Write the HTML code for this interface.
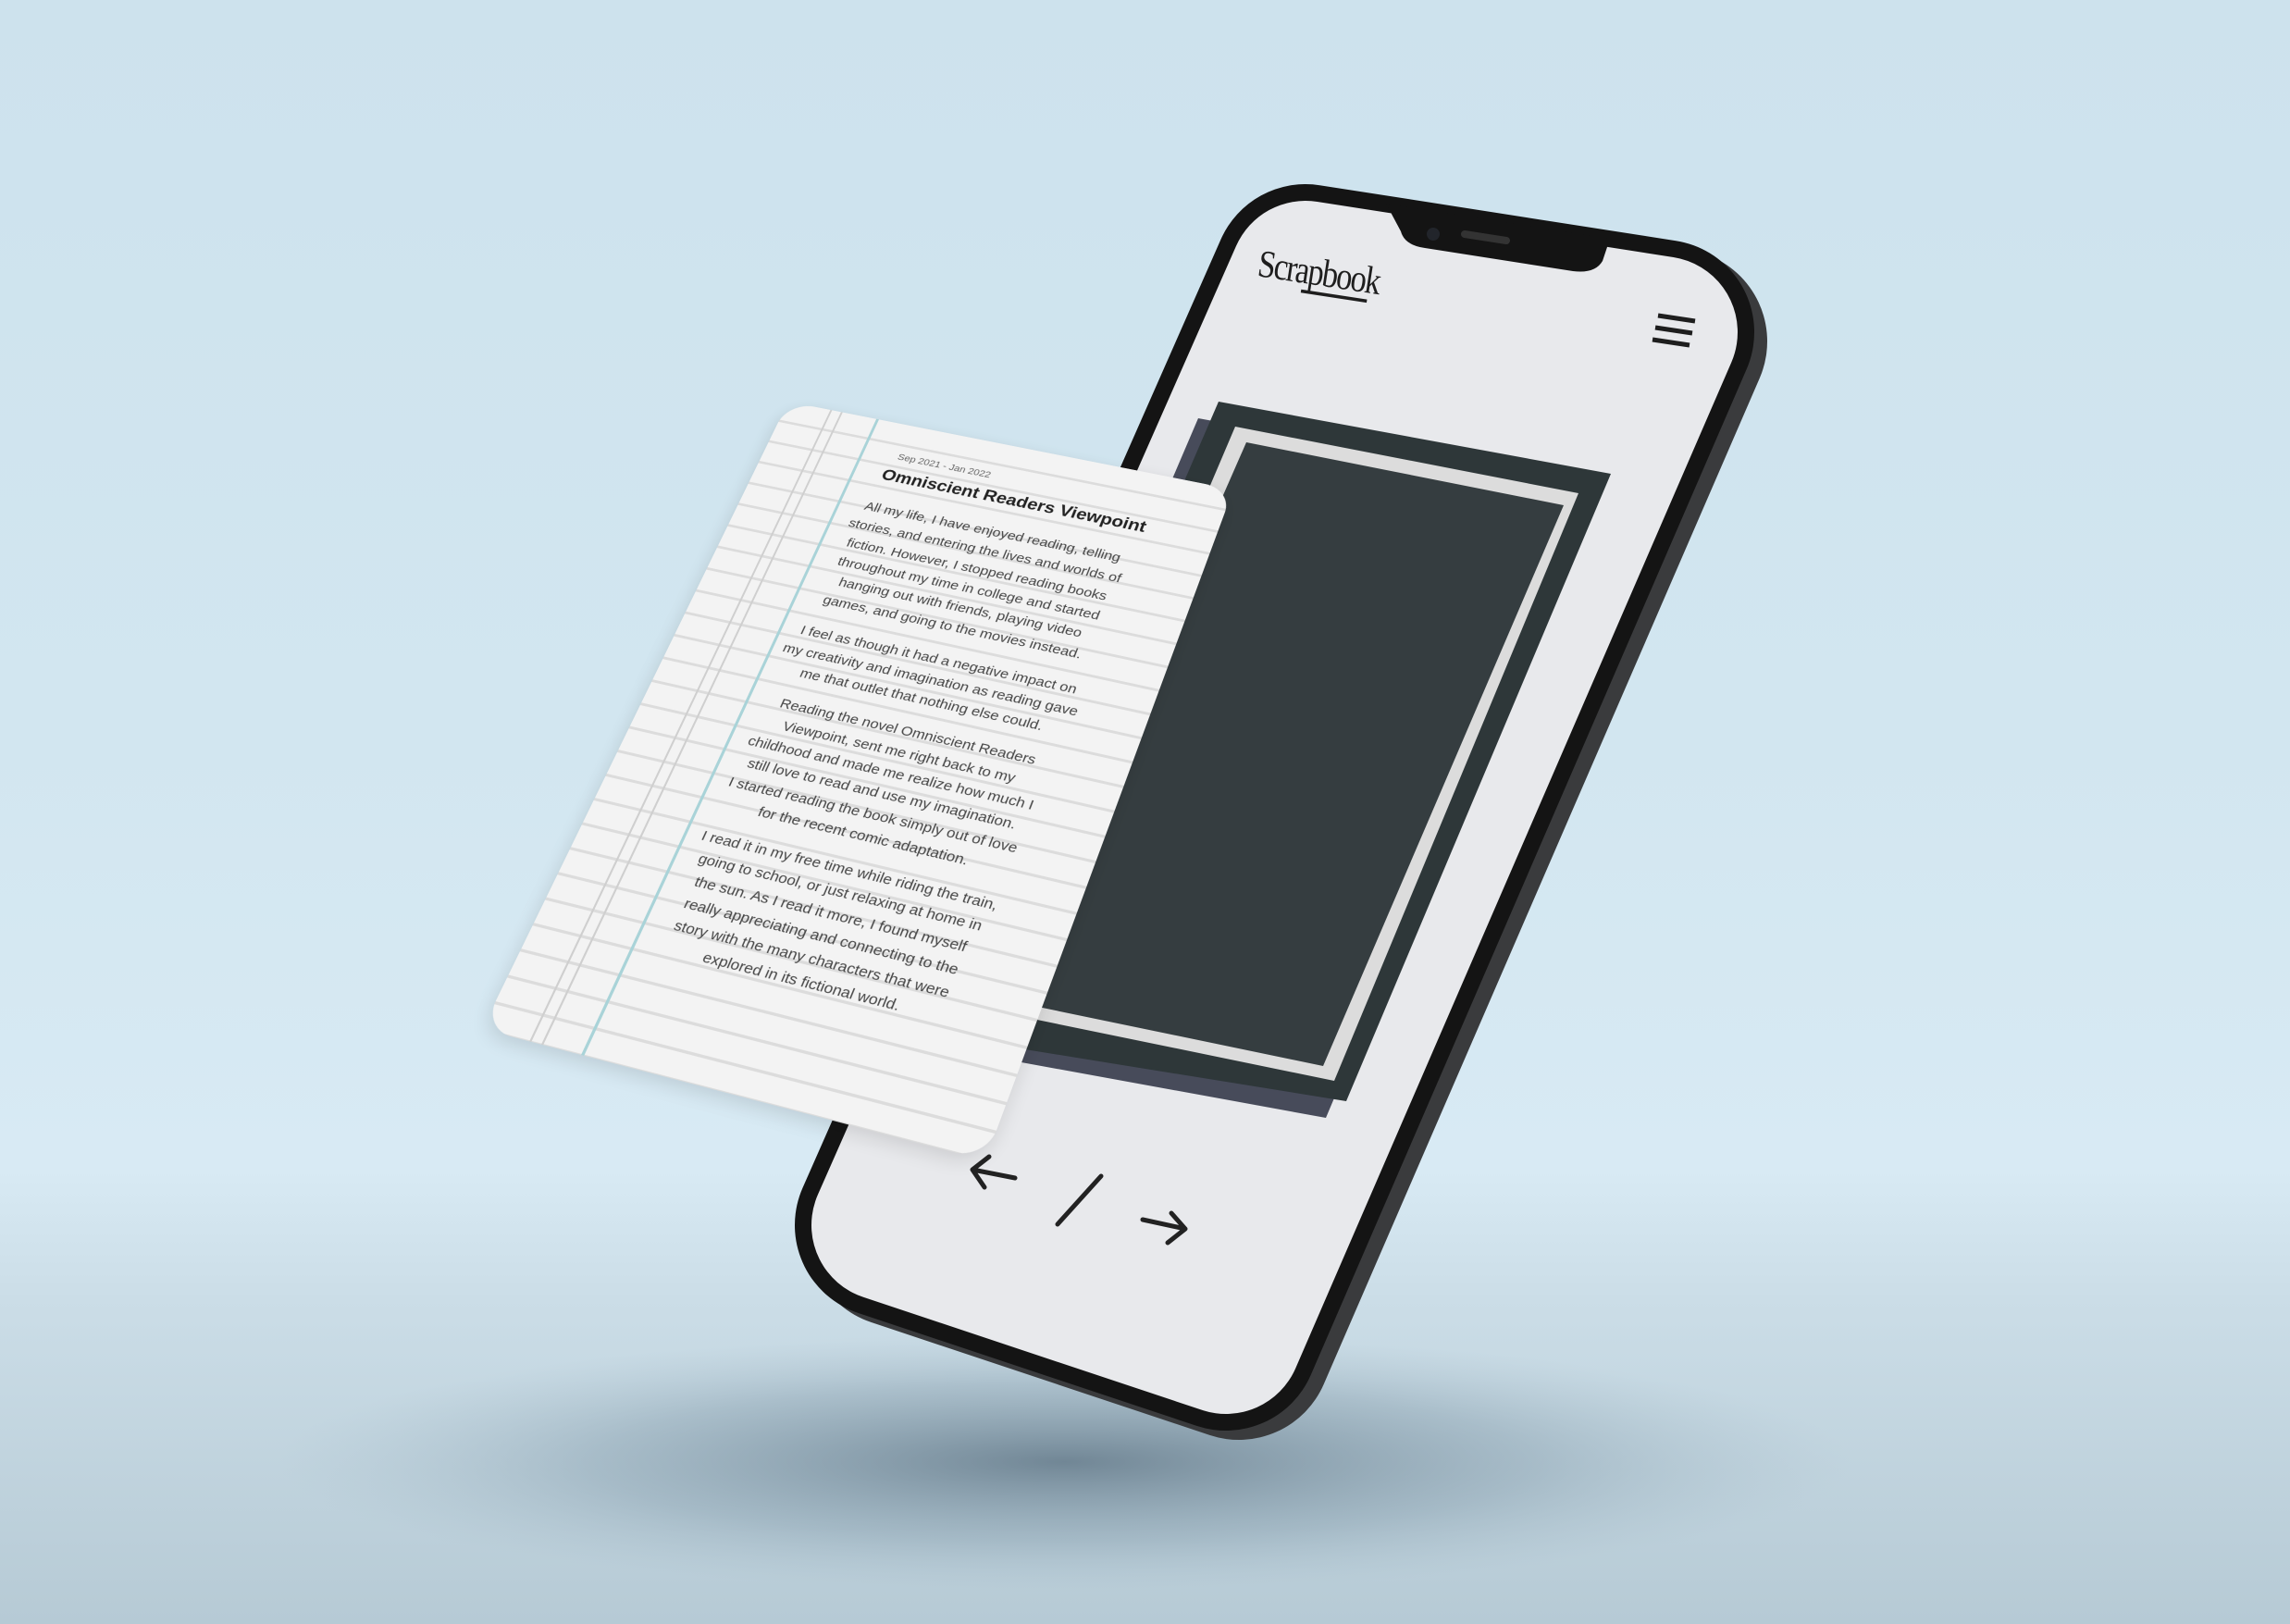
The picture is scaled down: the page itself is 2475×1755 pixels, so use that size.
<!DOCTYPE html>
<html><head><meta charset="utf-8"><style>
html,body{margin:0;padding:0;}
body{width:2475px;height:1755px;overflow:hidden;position:relative;
background:linear-gradient(180deg,#cde2ed 0%,#d2e6f0 45%,#d8eaf4 72%,#cbdde7 80%,#b6cad5 100%);}
svg.main{position:absolute;left:0;top:0;}
.card{position:absolute;left:0;top:0;width:490px;height:754px;transform-origin:0 0;
transform:matrix3d(0.87706,0.15239,0,-0.00007845,-0.53210,0.70049,0,-0.00017870,0,0,1,0,852,434,0,1);
border-radius:30px;overflow:hidden;background-color:#f3f3f3;
background-image:repeating-linear-gradient(180deg,transparent 0,transparent 25px,#dcdcdc 25px,#dcdcdc 28px);
box-shadow:0 6px 18px rgba(0,0,0,.12);font-family:"Liberation Sans",sans-serif;}
.vl{position:absolute;top:0;bottom:0;width:2px;background:#cfcfcf;}
.bl{position:absolute;top:0;bottom:0;width:3px;background:#a9d3d8;left:100px;}
.date{position:absolute;left:140px;top:36px;font-size:11px;color:#666;white-space:nowrap;}
.title{position:absolute;left:90px;width:370px;top:56px;text-align:center;font-size:19.5px;font-weight:bold;color:#222;white-space:nowrap;}
.txt{position:absolute;left:82px;width:370px;text-align:center;font-size:15.2px;line-height:24px;color:#444;white-space:nowrap;}
</style></head><body>
<svg class="main" width="2475" height="1755" viewBox="0 0 2475 1755">
<defs>
<radialGradient id="sh" cx="0.5" cy="0.5" r="0.5">
<stop offset="0" stop-color="#5d7383" stop-opacity="0.8"/>
<stop offset="0.6" stop-color="#7890a0" stop-opacity="0.35"/>
<stop offset="1" stop-color="#9fb4c1" stop-opacity="0"/>
</radialGradient>
</defs>
<ellipse cx="1150" cy="1580" rx="850" ry="140" fill="url(#sh)"/>
<polygon points="1411,299 1796,359 1325,1446 959,1324" transform="translate(14,10)" fill="#3a3b3d" stroke="#3a3b3d" stroke-width="200" stroke-linejoin="round"/>
<polygon points="1411,299 1796,359 1325,1446 959,1324" fill="#141414" stroke="#141414" stroke-width="200" stroke-linejoin="round"/>
<polygon points="1411,299 1796,359 1325,1446 959,1324" fill="#e8e9ec" stroke="#e8e9ec" stroke-width="164" stroke-linejoin="round"/>
<path d="M1498,220 L1740,258 L1732,282 Q1724,296 1700,293 L1540,268 Q1518,265 1514,250 Z" fill="#141414"/>
<circle cx="1549" cy="253" r="7" fill="#22252b"/>
<path d="M1583,253 L1628,260" stroke="#333" stroke-width="8" stroke-linecap="round"/>
<g transform="rotate(8.7 1358 298)">
<text x="1358" y="298" transform="translate(1358 0) scale(0.82 1) translate(-1358 0)" font-family="Liberation Serif,serif" font-size="42" letter-spacing="-2" fill="#1e1e1e">Scrapbook</text>
<path d="M1408,307 L1480,307" stroke="#1e1e1e" stroke-width="3.5"/>
</g>
<g stroke="#1e1e1e" stroke-width="5">
<path d="M1792,341 L1832,347"/><path d="M1789,354 L1829,360"/><path d="M1786,367 L1826,373"/>
</g>
<polygon points="1295,452 1719,530 1433,1208 1005,1130" fill="#474b5a"/>
<polygon points="1317,434 1741,512 1455,1190 1021,1120" fill="#2e3739"/>
<polygon points="1335,461 1706,533 1442,1168 1067,1091" fill="#dcdcdc"/>
<polygon points="1347,478 1690,546 1430,1152 1083,1080" fill="#353d40"/>
<g stroke="#222" stroke-width="5" fill="none" stroke-linecap="round" stroke-linejoin="round">
<path d="M1051,1264 L1097,1273 M1051,1264 L1069,1250 M1051,1264 L1064,1283"/>
<path d="M1190,1271 L1143,1323"/>
<path d="M1235,1318 L1281,1328 M1281,1328 L1266,1311 M1281,1328 L1262,1343"/>
</g>
</svg>
<div class="card">
<div class="vl" style="left:48px"></div>
<div class="vl" style="left:60px"></div>
<div class="bl"></div>
<div class="date">Sep 2021 - Jan 2022</div>
<div class="title">Omniscient Readers Viewpoint</div>
<div class="txt" style="top:98px">All my life, I have enjoyed reading, telling<br>stories, and entering the lives and worlds of<br>fiction. However, I stopped reading books<br>throughout my time in college and started<br>hanging out with friends, playing video<br>games, and going to the movies instead.</div>
<div class="txt" style="top:258px">I feel as though it had a negative impact on<br>my creativity and imagination as reading gave<br>me that outlet that nothing else could.</div>
<div class="txt" style="top:344px">Reading the novel Omniscient Readers<br>Viewpoint, sent me right back to my<br>childhood and made me realize how much I<br>still love to read and use my imagination.<br>I started reading the book simply out of love<br>for the recent comic adaptation.</div>
<div class="txt" style="top:502px">I read it in my free time while riding the train,<br>going to school, or just relaxing at home in<br>the sun. As I read it more, I found myself<br>really appreciating and connecting to the<br>story with the many characters that were<br>explored in its fictional world.</div>
</div>
</body></html>
